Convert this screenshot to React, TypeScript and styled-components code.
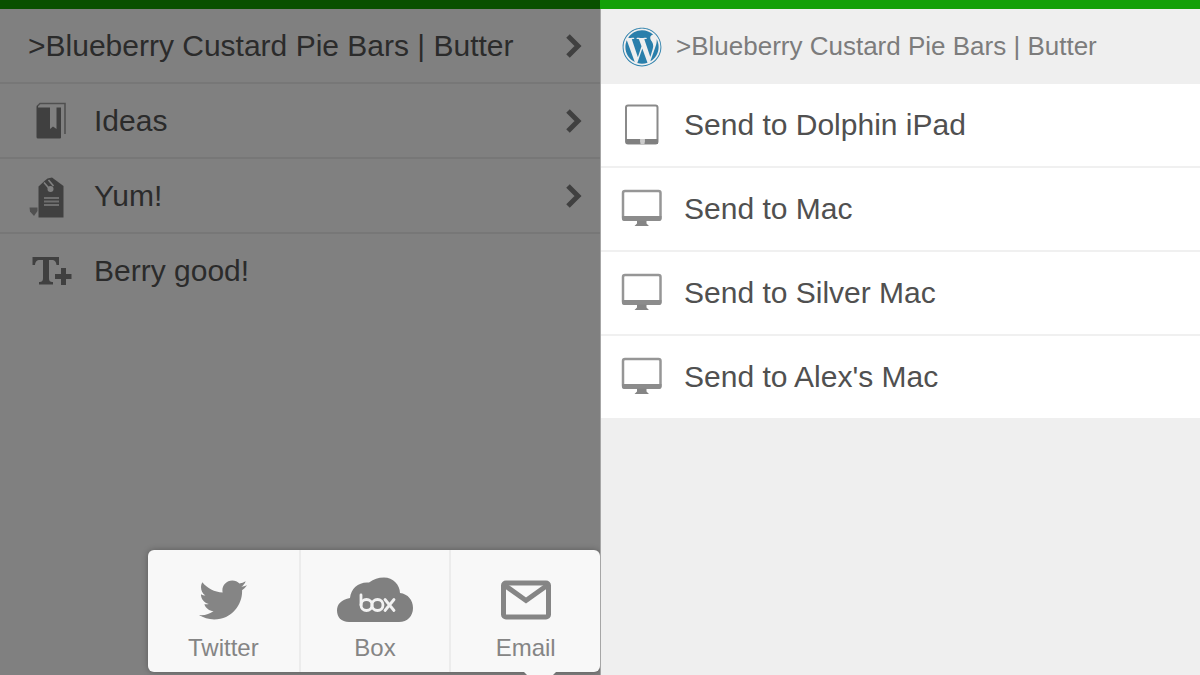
import React from "react";
import styled, { createGlobalStyle } from "styled-components";
import { FaTwitter, FaWordpress } from "react-icons/fa";

const GlobalStyle = createGlobalStyle`
  *, *::before, *::after { box-sizing: border-box; }
  body {
    margin: 0;
    font-family: "Liberation Sans", Arial, sans-serif;
    background: #efefef;
  }
  button { font: inherit; color: inherit; }
`;

const Page = styled.main`
  display: grid;
  grid-template-columns: 1fr 1fr;
  min-height: 100vh;
  overflow: hidden;
`;

const Panel = styled.section<{ $dim?: boolean }>`
  position: relative;
  min-width: 0;
  background: ${(p) => (p.$dim ? "#808080" : "#efefef")};
  color: ${(p) => (p.$dim ? "#2b2b2b" : "#505050")};
  box-shadow: ${(p) => (p.$dim ? "none" : "inset 1px 0 0 #a6a6a6")};
`;

const TopBar = styled.div<{ $dim?: boolean }>`
  height: 9px;
  background: ${(p) => (p.$dim ? "#095000" : "#13a008")};
`;

const List = styled.ul`
  list-style: none;
  margin: 0;
  padding: 0;
`;

const NoteItem = styled.li`
  & + & {
    border-top: 2px solid #777777;
  }
`;

const NoteButton = styled.button`
  display: flex;
  align-items: center;
  width: 100%;
  height: 73px;
  padding: 0 17px 0 28px;
  border: 0;
  background: none;
  text-align: left;
  font-size: 30px;
  line-height: 36px;
`;

const NoteIcon = styled.span`
  flex: none;
  display: flex;
  width: 66px;
  color: #404040;
`;

const Label = styled.span`
  flex: 1;
  min-width: 0;
  white-space: nowrap;
  overflow: hidden;
`;

const Chevron = styled.svg`
  flex: none;
  display: block;
  color: #404040;
`;

const SiteHeader = styled.header`
  display: flex;
  align-items: center;
  gap: 14px;
  height: 75px;
  padding: 0 22px;
`;

const SiteTitle = styled.h1`
  margin: 0;
  padding-bottom: 2px;
  min-width: 0;
  overflow: hidden;
  white-space: nowrap;
  font-size: 26px;
  line-height: 32px;
  font-weight: 400;
  color: #7c7c7c;
`;

const DeviceItem = styled.li`
  margin-left: 1px;
  background: #ffffff;
  & + & {
    border-top: 2px solid #f0f0f0;
  }
`;

const DeviceButton = styled.button`
  display: flex;
  align-items: center;
  gap: 20px;
  width: 100%;
  height: 82px;
  padding: 0 19px;
  border: 0;
  background: none;
  text-align: left;
  font-size: 30px;
  line-height: 36px;
`;

const SharePopover = styled.div`
  position: absolute;
  right: 0;
  bottom: 3px;
  display: grid;
  grid-template-columns: repeat(3, 1fr);
  width: 452px;
  height: 122px;
  border-radius: 6px;
  background: #f8f8f8;
  box-shadow: 0 0 6px rgba(0, 0, 0, 0.3);

  &::after {
    content: "";
    position: absolute;
    right: 44px;
    top: 100%;
    border: 16px solid transparent;
    border-top-color: #f8f8f8;
    border-bottom: 0;
  }
`;

const ShareButton = styled.button`
  display: flex;
  flex-direction: column;
  align-items: center;
  padding: 24px 0 8px;
  border: 0;
  background: none;
  color: #858585;
  font-size: 24px;
  line-height: 28px;

  & + & {
    border-left: 2px solid #ececec;
  }
`;

const ShareIcon = styled.span`
  display: flex;
  align-items: center;
  justify-content: center;
  height: 52px;
  margin-bottom: 8px;
`;

const ArrowIcon = () => (
  <Chevron width="18" height="26" viewBox="0 0 18 26" fill="none" aria-hidden="true">
    <path d="M3 3 13 13 3 23" stroke="currentColor" strokeWidth="5" />
  </Chevron>
);

const NotebookIcon = () => (
  <svg width="44" height="44" viewBox="0 0 44 44" aria-hidden="true">
    <path d="M9 7.500 12 4.500H37V35" fill="none" stroke="#505050" strokeWidth="1.600" />
    <path
      d="M8.500 7.500 10 6.500V8.500H22V30L25 27.500 28.500 30V8.500H33V38.500a1 1 0 0 1-1 1H10a1.500 1.500 0 0 1-1.500-1.500Z"
      fill="currentColor"
    />
  </svg>
);

const TagIcon = () => (
  <svg width="44" height="44" viewBox="0 0 44 44" aria-hidden="true">
    <path
      d="M10.500 12.500 17 6.500 19.500 4.500 24 3.500 35.500 12V43.500H10.500Z"
      fill="currentColor"
    />
    <path d="M16 8.500 22 15.500M20.500 6 25.500 12" stroke="#808080" strokeWidth="1.600" />
    <circle cx="22.500" cy="15" r="3" fill="#808080" />
    <path d="M16 24H31M16 27.500H31M16 31H31" stroke="#6f6f6f" strokeWidth="2" />
    <path d="M1.500 33.500H9.500V37L6 42 2 37.500Z" fill="#505050" />
  </svg>
);

const TextPlusIcon = () => (
  <svg width="44" height="44" viewBox="0 0 44 44" aria-hidden="true">
    <path
      d="M4.500 8H31V16H28.500C28 12.500 27 11 23.500 11H21V29C21 32 22 33 25 33V35.500H11V33C14 33 15 32 15 29V11H12C8.500 11 7.500 12.500 7 16H4.500Z"
      fill="currentColor"
    />
    <path d="M35.500 19V36M27 27.500H43.500" stroke="currentColor" strokeWidth="5" />
  </svg>
);

const TabletIcon = () => (
  <svg width="44" height="44" viewBox="0 0 44 44" aria-hidden="true">
    <rect x="6" y="2.500" width="31.500" height="38" rx="2" fill="none" stroke="#8a8a8a" strokeWidth="2" />
    <path d="M6 38.500H20.500M24.500 38.500H38" stroke="#808080" strokeWidth="5" />
    <path d="M20.500 38.500H24.500" stroke="#cccccc" strokeWidth="5" />
  </svg>
);

const MonitorIcon = () => (
  <svg width="44" height="44" viewBox="0 0 44 44" aria-hidden="true">
    <rect x="3" y="4" width="37.500" height="28.500" rx="2" fill="none" stroke="#969696" strokeWidth="2.500" />
    <path d="M2 29H41.500V32a2 2 0 0 1-2 2H4a2 2 0 0 1-2-2Z" fill="#8c8c8c" />
    <path d="M17 33.500H26.500V36.500L29 39H14.500L17 36.500Z" fill="#858585" />
  </svg>
);

const BoxIcon = () => (
  <svg width="76" height="46" viewBox="0 0 76 46" aria-hidden="true">
    <path
      d="M12 45C4 45 0 40 0 33.500 0 27 4.500 22.500 13 21 14 11 22 4.500 32 5.500 37 2 41 .5 47 .5 56 .5 63 8 63 16 71 17 76 23 76 31 76 39 70.500 45 62 45Z"
      fill="#808080"
    />
    <g fill="none" stroke="#f2f2f2" strokeWidth="2.800" strokeLinecap="round" strokeLinejoin="round">
      <path d="M24 18V28" />
      <circle cx="29.500" cy="28" r="5.500" />
      <circle cx="40.500" cy="28" r="5.500" />
      <path d="M48 22.500 57 33.500M57 22.500 48 33.500" />
    </g>
  </svg>
);

const MailIcon = () => (
  <svg width="50" height="40" viewBox="0 0 50 40" aria-hidden="true">
    <rect x="2.500" y="3" width="45" height="34" rx="2.500" fill="none" stroke="#858585" strokeWidth="5" />
    <path d="M4 5.500 25 20.500 46 5.500" fill="none" stroke="#858585" strokeWidth="5" />
  </svg>
);

const notes = [
  { label: ">Blueberry Custard Pie Bars | Butter", icon: null, opens: true },
  { label: "Ideas", icon: <NotebookIcon />, opens: true },
  { label: "Yum!", icon: <TagIcon />, opens: true },
  { label: "Berry good!", icon: <TextPlusIcon />, opens: false },
];

const devices = [
  { label: "Send to Dolphin iPad", icon: <TabletIcon /> },
  { label: "Send to Mac", icon: <MonitorIcon /> },
  { label: "Send to Silver Mac", icon: <MonitorIcon /> },
  { label: "Send to Alex's Mac", icon: <MonitorIcon /> },
];

const shares = [
  { label: "Twitter", icon: <FaTwitter size={48} aria-hidden="true" /> },
  { label: "Box", icon: <BoxIcon /> },
  { label: "Email", icon: <MailIcon /> },
];

export default function App() {
  return (
    <>
      <GlobalStyle />
      <Page>
        <Panel $dim>
          <TopBar $dim />
          <List>
            {notes.map((note) => (
              <NoteItem key={note.label}>
                <NoteButton type="button">
                  {note.icon && <NoteIcon>{note.icon}</NoteIcon>}
                  <Label>{note.label}</Label>
                  {note.opens && <ArrowIcon />}
                </NoteButton>
              </NoteItem>
            ))}
          </List>
          <SharePopover>
            {shares.map((share) => (
              <ShareButton type="button" key={share.label}>
                <ShareIcon>{share.icon}</ShareIcon>
                {share.label}
              </ShareButton>
            ))}
          </SharePopover>
        </Panel>
        <Panel>
          <TopBar />
          <SiteHeader>
            <FaWordpress size={40} color="#2a7fab" aria-hidden="true" />
            <SiteTitle>&gt;Blueberry Custard Pie Bars | Butter</SiteTitle>
          </SiteHeader>
          <List>
            {devices.map((device) => (
              <DeviceItem key={device.label}>
                <DeviceButton type="button">
                  {device.icon}
                  <span>{device.label}</span>
                </DeviceButton>
              </DeviceItem>
            ))}
          </List>
        </Panel>
      </Page>
    </>
  );
}
